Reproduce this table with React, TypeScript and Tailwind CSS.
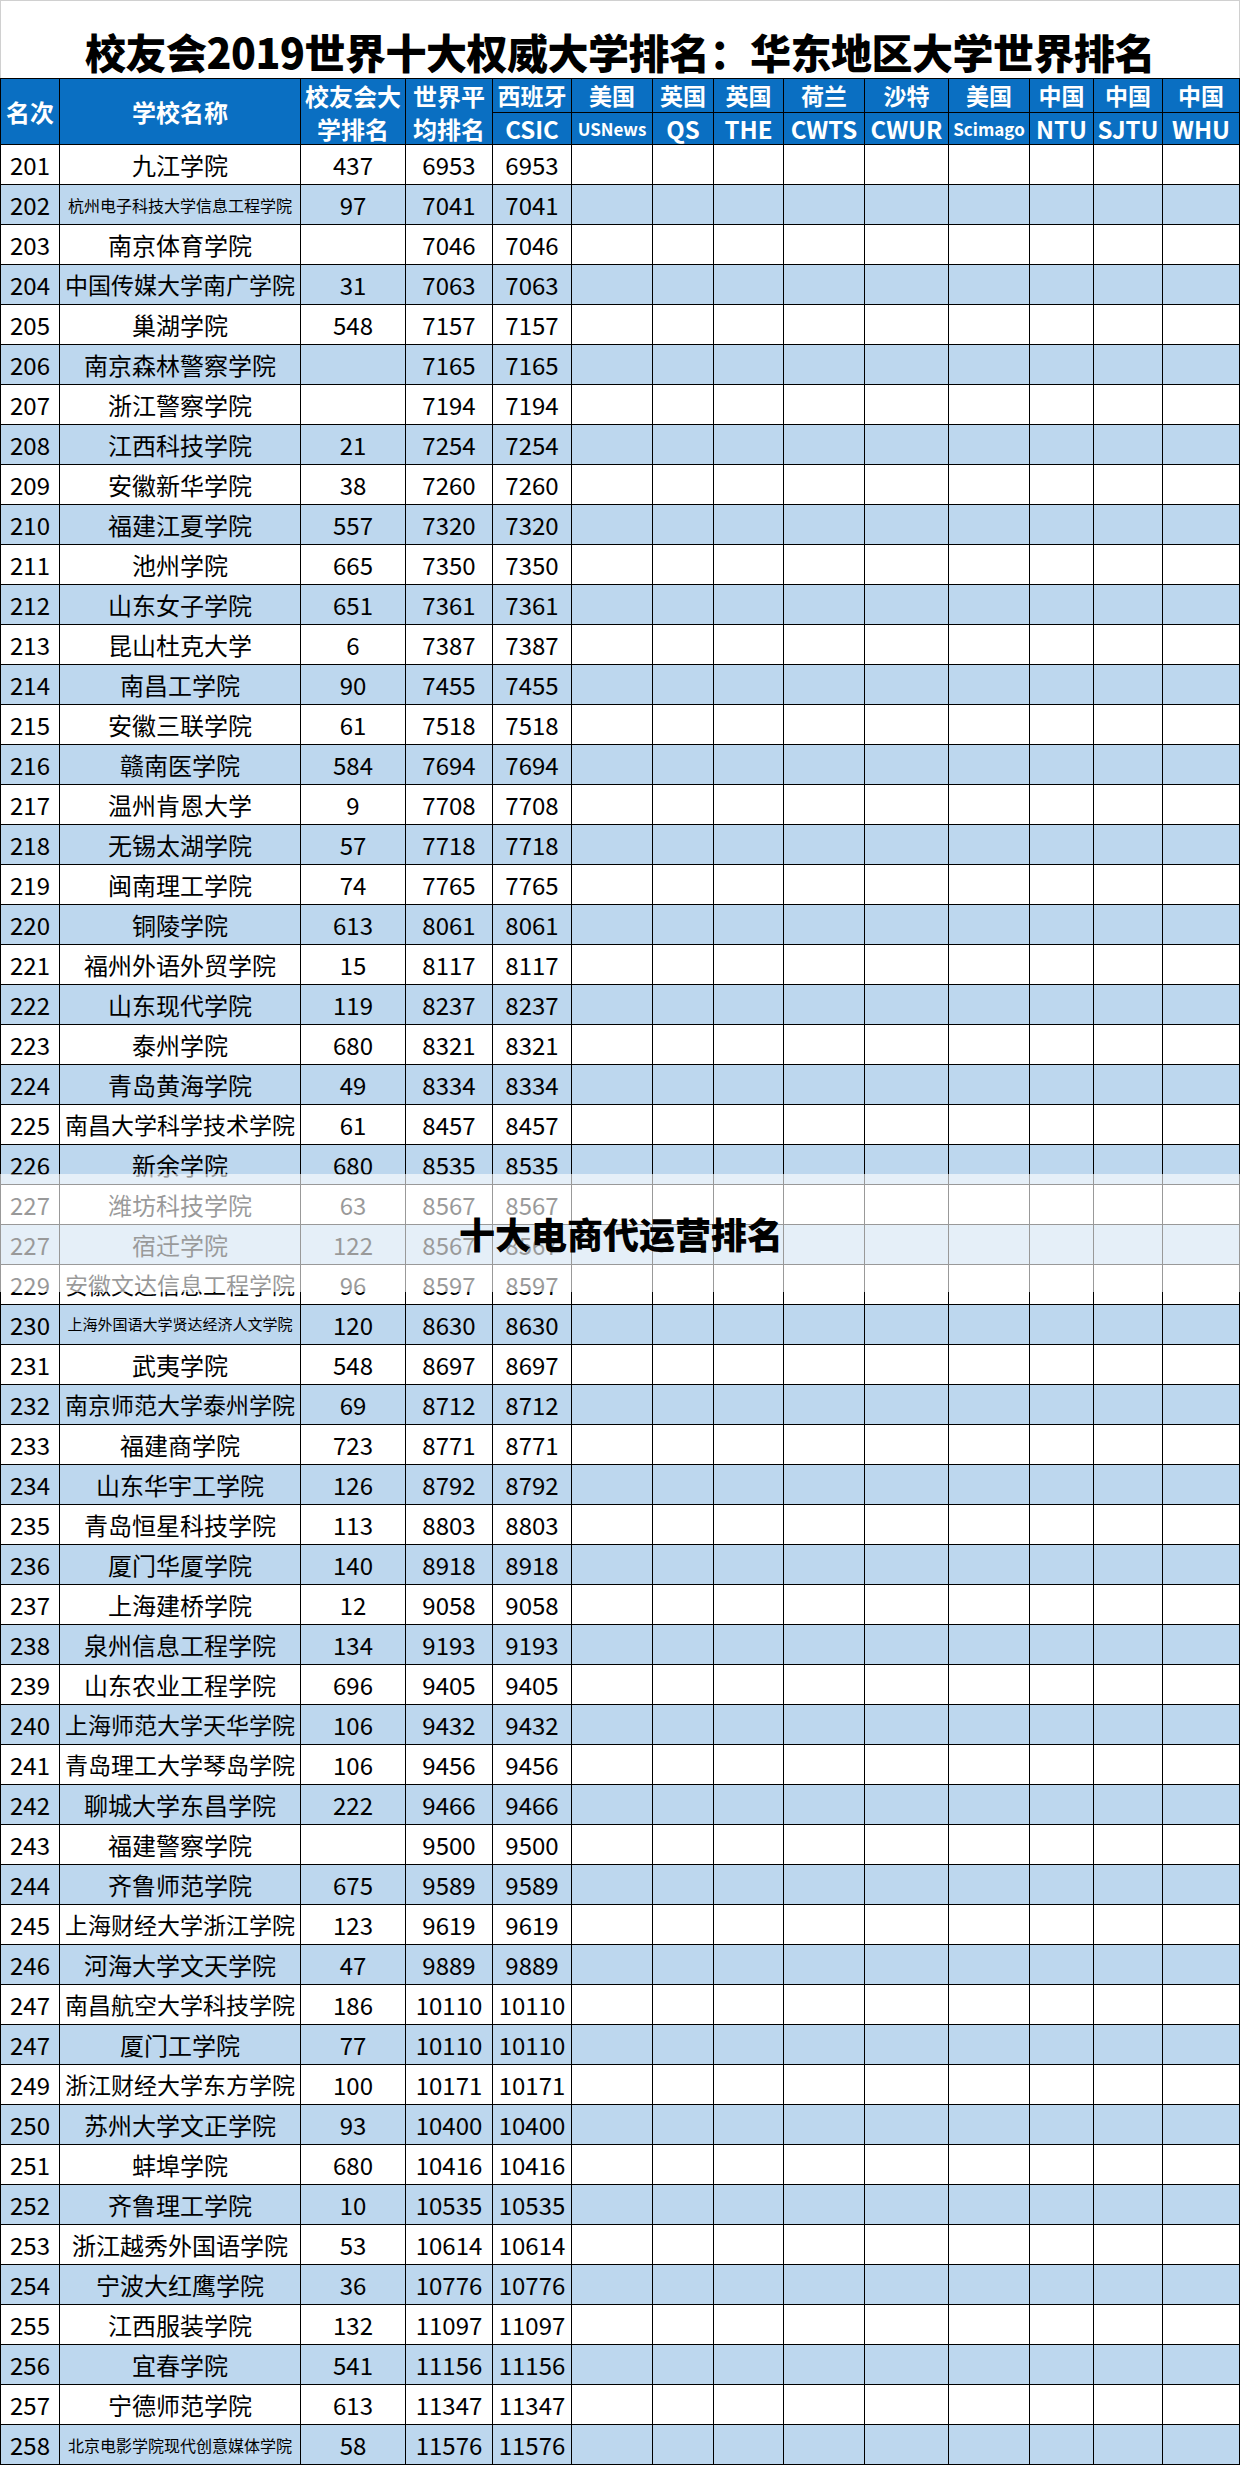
import React from "react";

type Row = [string, string, string, string];

const rows: Row[] = [
  ["201", "九江学院", "437", "6953"],
  ["202", "杭州电子科技大学信息工程学院", "97", "7041"],
  ["203", "南京体育学院", "", "7046"],
  ["204", "中国传媒大学南广学院", "31", "7063"],
  ["205", "巢湖学院", "548", "7157"],
  ["206", "南京森林警察学院", "", "7165"],
  ["207", "浙江警察学院", "", "7194"],
  ["208", "江西科技学院", "21", "7254"],
  ["209", "安徽新华学院", "38", "7260"],
  ["210", "福建江夏学院", "557", "7320"],
  ["211", "池州学院", "665", "7350"],
  ["212", "山东女子学院", "651", "7361"],
  ["213", "昆山杜克大学", "6", "7387"],
  ["214", "南昌工学院", "90", "7455"],
  ["215", "安徽三联学院", "61", "7518"],
  ["216", "赣南医学院", "584", "7694"],
  ["217", "温州肯恩大学", "9", "7708"],
  ["218", "无锡太湖学院", "57", "7718"],
  ["219", "闽南理工学院", "74", "7765"],
  ["220", "铜陵学院", "613", "8061"],
  ["221", "福州外语外贸学院", "15", "8117"],
  ["222", "山东现代学院", "119", "8237"],
  ["223", "泰州学院", "680", "8321"],
  ["224", "青岛黄海学院", "49", "8334"],
  ["225", "南昌大学科学技术学院", "61", "8457"],
  ["226", "新余学院", "680", "8535"],
  ["227", "潍坊科技学院", "63", "8567"],
  ["227", "宿迁学院", "122", "8567"],
  ["229", "安徽文达信息工程学院", "96", "8597"],
  ["230", "上海外国语大学贤达经济人文学院", "120", "8630"],
  ["231", "武夷学院", "548", "8697"],
  ["232", "南京师范大学泰州学院", "69", "8712"],
  ["233", "福建商学院", "723", "8771"],
  ["234", "山东华宇工学院", "126", "8792"],
  ["235", "青岛恒星科技学院", "113", "8803"],
  ["236", "厦门华厦学院", "140", "8918"],
  ["237", "上海建桥学院", "12", "9058"],
  ["238", "泉州信息工程学院", "134", "9193"],
  ["239", "山东农业工程学院", "696", "9405"],
  ["240", "上海师范大学天华学院", "106", "9432"],
  ["241", "青岛理工大学琴岛学院", "106", "9456"],
  ["242", "聊城大学东昌学院", "222", "9466"],
  ["243", "福建警察学院", "", "9500"],
  ["244", "齐鲁师范学院", "675", "9589"],
  ["245", "上海财经大学浙江学院", "123", "9619"],
  ["246", "河海大学文天学院", "47", "9889"],
  ["247", "南昌航空大学科技学院", "186", "10110"],
  ["247", "厦门工学院", "77", "10110"],
  ["249", "浙江财经大学东方学院", "100", "10171"],
  ["250", "苏州大学文正学院", "93", "10400"],
  ["251", "蚌埠学院", "680", "10416"],
  ["252", "齐鲁理工学院", "10", "10535"],
  ["253", "浙江越秀外国语学院", "53", "10614"],
  ["254", "宁波大红鹰学院", "36", "10776"],
  ["255", "江西服装学院", "132", "11097"],
  ["256", "宜春学院", "541", "11156"],
  ["257", "宁德师范学院", "613", "11347"],
  ["258", "北京电影学院现代创意媒体学院", "58", "11576"],
];

const headTop = ["西班牙", "美国", "英国", "英国", "荷兰", "沙特", "美国", "中国", "中国", "中国"];
const headBottom = ["CSIC", "USNews", "QS", "THE", "CWTS", "CWUR", "Scimago", "NTU", "SJTU", "WHU"];

const cols =
  "grid grid-cols-[59px_241px_105px_87px_79px_81px_61px_70px_81px_84px_81px_64px_69px_77px]";

const nameSize = (name: string) => {
  if (name.length >= 15) return "text-[15px]";
  if (name.length >= 14) return "text-[16px]";
  if (name.length >= 10) return "text-[23px]";
  return "text-[24px]";
};

const subSize = (label: string) =>
  label === "USNews" || label === "Scimago" ? "text-[17px]" : "text-[24px]";

export default function App() {
  return (
    <div className="relative w-[1240px] bg-white font-['Noto_Sans_CJK_SC','Liberation_Sans',sans-serif] text-black">
      {/* title */}
      <div className="h-[78px] border-t border-l border-r border-[#d0d0d0] pt-[28px] text-center">
        <h1 className="text-[41px] font-black leading-[45px] tracking-[-0.5px]">
          校友会2019世界十大权威大学排名：华东地区大学世界排名
        </h1>
      </div>

      {/* header */}
      <div
        className={`${cols} grid-rows-[34px_32px] border-t border-l border-black bg-[#0a6fc2] text-white font-bold`}
      >
        <div className="row-span-2 flex items-center justify-center border-r border-b border-black text-[24px]">
          名次
        </div>
        <div className="row-span-2 flex items-center justify-center border-r border-b border-black text-[24px]">
          学校名称
        </div>
        <div className="row-span-2 flex flex-col items-center justify-center border-r border-b border-black text-[24px] leading-[33px]">
          <span>校友会大</span>
          <span>学排名</span>
        </div>
        <div className="row-span-2 flex flex-col items-center justify-center border-r border-b border-black text-[24px] leading-[33px]">
          <span>世界平</span>
          <span>均排名</span>
        </div>
        {headTop.map((t, i) => (
          <div
            key={"t" + i}
            className="flex items-center justify-center border-r border-b border-black text-[23px] leading-none"
          >
            {t}
          </div>
        ))}
        {headBottom.map((t) => (
          <div
            key={t}
            className={`flex items-center justify-center border-r border-b border-black leading-none ${subSize(t)}`}
          >
            {t}
          </div>
        ))}
      </div>

      {/* body */}
      <div className="border-l border-black">
        {rows.map((r, i) => (
          <div
            key={i}
            className={`${cols} h-[40px] ${i % 2 === 1 ? "bg-[#bdd7ee]" : "bg-white"}`}
          >
            <div className="flex items-center justify-center border-r border-b border-black text-[24px]">
              {r[0]}
            </div>
            <div
              className={`flex items-center justify-center whitespace-nowrap border-r border-b border-black ${nameSize(r[1])}`}
            >
              {r[1]}
            </div>
            <div className="flex items-center justify-center border-r border-b border-black text-[24px]">
              {r[2]}
            </div>
            <div className="flex items-center justify-center border-r border-b border-black text-[24px]">
              {r[3]}
            </div>
            <div className="flex items-center justify-center border-r border-b border-black text-[24px]">
              {r[3]}
            </div>
            {Array.from({ length: 9 }).map((_, j) => (
              <div key={j} className="border-r border-b border-black" />
            ))}
          </div>
        ))}
      </div>

      {/* watermark band */}
      <div className="absolute left-0 top-[1174px] flex h-[118px] w-full items-center bg-white/60 pl-[459px]">
        <span className="text-[36px] font-black leading-none">十大电商代运营排名</span>
      </div>
    </div>
  );
}
